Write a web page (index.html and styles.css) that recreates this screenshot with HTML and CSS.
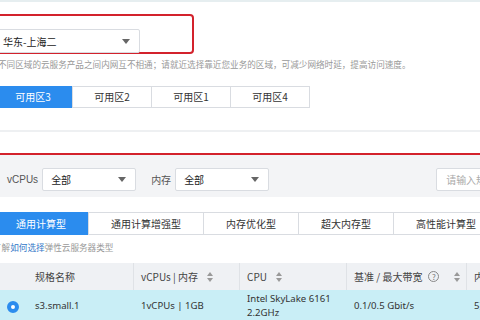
FILE: index.html
```html
<!DOCTYPE html>
<html lang="zh-CN">
<head>
  <meta charset="UTF-8">
  <title>购买弹性云服务器</title>
  <link rel="stylesheet" href="styles.css">
</head>
<body>
  <div class="topline"></div>

  <div class="page">
    <!-- region -->
    <div class="highlight">
      <div class="select region-select">
        <span>华东-上海二</span>
        <svg class="caret" width="8" height="5" viewBox="0 0 8 5"><path d="M0 0h8L4 5z"/></svg>
      </div>
    </div>
    <p class="hint">不同区域的云服务产品之间内网互不相通；请就近选择靠近您业务的区域，可减少网络时延，提高访问速度。</p>

    <div class="zones">
      <div class="zone active">可用区3</div>
      <div class="zone">可用区2</div>
      <div class="zone">可用区1</div>
      <div class="zone">可用区4</div>
    </div>

    <div class="divider"></div>
    <div class="redline"></div>

    <!-- filters -->
    <div class="filters">
      <label class="flabel">vCPUs</label>
      <div class="select small">
        <span>全部</span>
        <svg class="caret" width="8" height="5" viewBox="0 0 8 5"><path d="M0 0h8L4 5z"/></svg>
      </div>
      <label class="flabel cjk">内存</label>
      <div class="select small">
        <span>全部</span>
        <svg class="caret" width="8" height="5" viewBox="0 0 8 5"><path d="M0 0h8L4 5z"/></svg>
      </div>
      <div class="search">请输入规格名称</div>
    </div>

    <div class="types">
      <div class="type active">通用计算型</div>
      <div class="type">通用计算增强型</div>
      <div class="type">内存优化型</div>
      <div class="type">超大内存型</div>
      <div class="type">高性能计算型</div>
    </div>

    <p class="hint learn">了解<a href="#">如何选择</a>弹性云服务器类型</p>

    <!-- flavor table -->
    <div class="table">
      <div class="th first">规格名称</div>
      <div class="th">vCPUs | 内存 <span class="sort"><svg width="6" height="10" viewBox="0 0 6 10"><path d="M3 0l3 4H0zM3 10L0 6h6z"/></svg></span></div>
      <div class="th">CPU <span class="sort"><svg width="6" height="10" viewBox="0 0 6 10"><path d="M3 0l3 4H0zM3 10L0 6h6z"/></svg></span></div>
      <div class="th">基准 / 最大带宽 <span class="help">?</span><span class="sort push"><svg width="6" height="10" viewBox="0 0 6 10"><path d="M3 0l3 4H0zM3 10L0 6h6z"/></svg></span></div>
      <div class="th">内网收发包</div>

      <div class="td first selected"><span class="radio"></span>s3.small.1</div>
      <div class="td selected">1vCPUs | 1GB</div>
      <div class="td selected cpu">Intel SkyLake 6161<br>2.2GHz</div>
      <div class="td selected">0.1/0.5 Gbit/s</div>
      <div class="td selected">5万</div>
    </div>
  </div>
</body>
</html>
```

FILE: styles.css
```css
:root {
  --blue: #2b8cee;
  --border: #d9dce1;
  --text: #333;
  --muted: #999;
  --red: #d3222c;
}
* {
  box-sizing: border-box;
}
html, body {
  overflow: hidden;
}
body {
  margin: 0;
  width: 480px;
  height: 320px;
  background: #fff;
  color: var(--text);
  font-family: "Liberation Sans", "Noto Sans CJK SC", sans-serif;
  font-size: 10px;
}
.topline {
  height: 2px;
  background: #e6eef0;
}
.page {
  margin-left: -7px;
  width: 640px;
}
.highlight {
  margin-top: 12px;
  width: 201px;
  height: 40px;
  border: 2px solid var(--red);
  border-radius: 4px;
  padding: 13px 0 0 3px;
}
.select {
  display: flex;
  align-items: center;
  justify-content: space-between;
  height: 23px;
  padding: 0 9px 0 8px;
  border: 1px solid var(--border);
  border-radius: 2px;
  background: #fff;
  font-family: "Noto Sans CJK SC", sans-serif;
  font-size: 10px;
  color: #222;
}
.region-select {
  width: 142px;
  height: 24px;
  padding-left: 4px;
}
.caret {
  fill: #666;
}
.hint {
  margin: 4px 0 0 5px;
  line-height: 12px;
  font-family: "Noto Sans CJK SC", sans-serif;
  font-size: 8.6px;
  color: var(--muted);
  white-space: nowrap;
}
.zones {
  display: flex;
  margin-top: 16px;
}
.zone {
  width: 80px;
  height: 22px;
  line-height: 20px;
  text-align: center;
  border: 1px solid var(--border);
  margin-left: -1px;
  font-family: "Noto Sans CJK SC", sans-serif;
}
.zone:first-child {
  margin-left: 0;
}
.zone.active, .type.active {
  background: var(--blue);
  border-color: var(--blue);
  color: #fff;
}
.divider {
  margin-top: 22px;
  height: 2px;
  background: #eef0f2;
}
.redline {
  margin-top: 21px;
  height: 2px;
  background: var(--red);
}
.filters {
  display: flex;
  align-items: center;
  background: #f3f4f6;
  padding: 13px 0 6px 14px;
}
.flabel {
  color: #555;
  font-size: 10px;
  margin-right: 4px;
}
.flabel.cjk {
  margin-left: 15px;
  font-family: "Noto Sans CJK SC", sans-serif;
}
.select.small {
  width: 94px;
}
.search {
  margin-left: 167px;
  width: 150px;
  height: 23px;
  line-height: 21px;
  padding-left: 9px;
  border: 1px solid var(--border);
  border-radius: 2px;
  background: #fff;
  color: #aaa;
  font-family: "Noto Sans CJK SC", sans-serif;
}
.types {
  display: flex;
  margin-top: 15px;
}
.type {
  height: 23px;
  line-height: 21px;
  padding: 0 22px;
  border: 1px solid var(--border);
  margin-left: -1px;
  font-family: "Noto Sans CJK SC", sans-serif;
  white-space: nowrap;
}
.type:first-child {
  margin-left: 0;
}
.learn {
  margin: 6px 0 0 0;
}
.learn a {
  color: #3478c8;
  text-decoration: none;
}
.table {
  margin-top: 10px;
  display: grid;
  grid-template-columns: 141px 106px 107px 120px 166px;
}
.th {
  display: flex;
  align-items: center;
  height: 27px;
  padding: 0 6px 0 7px;
  background: #eff1f4;
  border-right: 1px solid #dfe2e6;
  font-family: "Noto Sans CJK SC", sans-serif;
  color: #444;
  white-space: nowrap;
}
.th.first, .td.first {
  padding-left: 42px;
}
.sort {
  display: flex;
  margin-left: 9px;
  fill: #999;
}
.sort.push {
  margin-left: auto;
}
.help {
  display: inline-flex;
  align-items: center;
  justify-content: center;
  width: 11px;
  height: 11px;
  margin-left: 6px;
  border: 1px solid #888;
  border-radius: 50%;
  font-size: 8px;
  color: #777;
}
.td {
  display: flex;
  align-items: center;
  height: 32px;
  padding: 0 7px;
  line-height: 14px;
  font-size: 9.6px;
  color: #333;
  white-space: nowrap;
  font-family: "Noto Sans", "Noto Sans CJK SC", sans-serif;
}
.td.selected {
  background: #c9eef6;
}
.td.first {
  position: relative;
}
.radio {
  position: absolute;
  left: 14px;
  top: 11px;
  width: 12px;
  height: 12px;
  border-radius: 50%;
  border: 4px solid var(--blue);
  background: #fff;
}
```
